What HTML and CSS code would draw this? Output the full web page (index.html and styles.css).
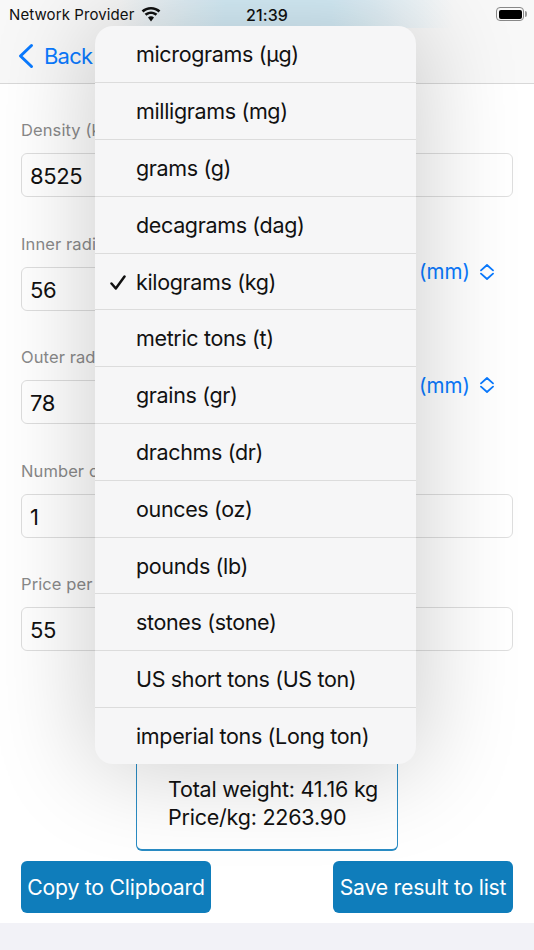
FILE: index.html
```html
<!DOCTYPE html>
<html lang="en">
<head>
<meta charset="utf-8">
<title>Ring weight</title>
<link rel="stylesheet" href="styles.css">
</head>
<body>
<div class="screen">
  <header class="top">
    <div class="status">
      <div class="status-left">
        <span>Network Provider</span>
        <svg class="wifi" viewBox="0 0 20 15" width="20" height="15"><path d="M10 2.600c2.900 0 5.500 1.100 7.500 2.900l1.900-2C16.900 1.300 13.600 0 10 0S3.100 1.300.6 3.500l1.900 2c2-1.800 4.600-2.900 7.500-2.900z"/><path d="M10 7.100c1.700 0 3.300.6 4.500 1.700l1.900-2C14.700 5.300 12.500 4.400 10 4.400s-4.700.9-6.400 2.400l1.900 2C6.700 7.700 8.300 7.100 10 7.100z"/><path d="M10 9.300c-1.200 0-2.200.4-3 1.100l3 4 3-4c-.8-.7-1.800-1.100-3-1.100z"/></svg>
      </div>
      <span class="clock">21:39</span>
      <div class="battery"><span class="battery-fill"></span></div>
    </div>
    <nav class="nav">
      <svg class="chev" viewBox="0 0 17 26" width="17" height="26"><path d="M14.500 2.500 3.500 13l11 10.500" fill="none" stroke="currentColor" stroke-width="3" stroke-linecap="round" stroke-linejoin="round"/></svg>
      <span>Back</span>
    </nav>
  </header>
  <main class="content">
    <div class="field">
      <label class="label">Density (kg/m³)</label>
      <div class="row"><div class="input">8525</div></div>
    </div>
    <div class="field">
      <label class="label">Inner radius</label>
      <div class="row"><div class="input short">56</div><div class="unit">(mm)<svg viewBox="0 0 14 16" width="14" height="16"><path d="M1 6.300 7 1l6 5.300M1 9.700 7 15l6-5.300" fill="none" stroke="currentColor" stroke-width="1.800" stroke-linecap="round" stroke-linejoin="round"/></svg></div></div>
    </div>
    <div class="field">
      <label class="label">Outer radius</label>
      <div class="row"><div class="input short">78</div><div class="unit">(mm)<svg viewBox="0 0 14 16" width="14" height="16"><path d="M1 6.300 7 1l6 5.300M1 9.700 7 15l6-5.300" fill="none" stroke="currentColor" stroke-width="1.800" stroke-linecap="round" stroke-linejoin="round"/></svg></div></div>
    </div>
    <div class="field">
      <label class="label">Number of items</label>
      <div class="row"><div class="input">1</div></div>
    </div>
    <div class="field">
      <label class="label">Price per kg</label>
      <div class="row"><div class="input">55</div></div>
    </div>
    <div class="result">
      <div>Total weight: 41.16 kg</div>
      <div>Price/kg: 2263.90</div>
    </div>
    <div class="actions">
      <button class="btn">Copy to Clipboard</button>
      <button class="btn">Save result to list</button>
    </div>
  </main>
  <div class="menu">
    <div class="item">micrograms (µg)</div>
    <div class="item">milligrams (mg)</div>
    <div class="item">grams (g)</div>
    <div class="item">decagrams (dag)</div>
    <div class="item"><svg class="check" viewBox="0 0 16 15" width="16" height="15"><path d="M1.500 8.500 5.800 13.500 14.500 1.500" fill="none" stroke="currentColor" stroke-width="2.500" stroke-linecap="round" stroke-linejoin="round"/></svg>kilograms (kg)</div>
    <div class="item">metric tons (t)</div>
    <div class="item">grains (gr)</div>
    <div class="item">drachms (dr)</div>
    <div class="item">ounces (oz)</div>
    <div class="item">pounds (lb)</div>
    <div class="item">stones (stone)</div>
    <div class="item">US short tons (US ton)</div>
    <div class="item">imperial tons (Long ton)</div>
  </div>
</div>
</body>
</html>
```
FILE: styles.css
```css
* { box-sizing: border-box; }
html, body { margin: 0; padding: 0; }
body { font-family: Inter, "Liberation Sans", sans-serif; color: #111; background: #f2f2f7; }
.screen { position: relative; width: 534px; height: 950px; overflow: hidden; background: #f2f2f7; }
.top { height: 84px; background: linear-gradient(90deg, #f8f8f8 22%, #d8f0fb 42%, #d8f0fb 62%, #f8f8f8 85%) top / 100% 28px no-repeat, #f8f8f8; border-bottom: 1px solid #d8d8d8; }
.status { position: relative; height: 28px; display: flex; align-items: center; justify-content: space-between; padding: 0 9px; font-size: 15px; letter-spacing: .1px; }
.status-left { display: flex; align-items: center; gap: 7px; }
.clock { position: absolute; left: 246px; top: 5px; font-size: 16px; font-weight: 500; }
.wifi { fill: #111; }
.battery { position: relative; width: 28px; height: 14px; border: 1px solid #888; border-radius: 4px; padding: 1.500px; margin-right: 1px; }
.battery::after { content: ""; position: absolute; right: -4px; top: 3px; width: 2px; height: 6px; background: #999; border-radius: 0 2px 2px 0; }
.battery-fill { display: block; height: 100%; background: #000; border-radius: 2px; }
.nav { height: 55px; display: flex; align-items: center; gap: 10px; padding-left: 17px; font-size: 22px; letter-spacing: -.8px; color: #0a7aff; }
.content { height: 839px; background: #fff; padding: 33px 21px 0; }
.field { height: 113.600px; }
.label { display: block; height: 36px; font-size: 16.500px; letter-spacing: .1px; color: #8a8a8a; line-height: 26px; }
.row { display: flex; align-items: center; }
.input { flex: 1; height: 44px; border: 1px solid #dedede; border-radius: 6px; padding-left: 8px; font-size: 22px; letter-spacing: -.4px; line-height: 44px; background: #fff; }
.short { flex: 0 0 385px; }
.unit { display: flex; align-items: center; gap: 10px; margin: -34px 0 0 13px; font-size: 20.500px; color: #0a7aff; }
.result { margin: -40px auto 0; width: 262px; height: 206px; padding: 130px 0 0 31px; border-style: solid; border-color: #2a8cc4; border-width: 0 1px 2px; border-radius: 6px; font-size: 21.500px; letter-spacing: -.22px; line-height: 28.500px; }
.actions { display: flex; justify-content: space-between; margin-top: 10px; }
.btn { height: 52px; padding: 0; width: 190px; border: 0; border-radius: 6px; background: #0f7dbb; color: #fff; font: inherit; font-size: 21.200px; letter-spacing: -.22px; }
.btn + .btn { width: 180px; }
.menu { position: absolute; left: 95px; top: 26px; width: 321px; background: #f6f6f7; border-radius: 18px; box-shadow: 0 0 100px 5px rgba(0,0,0,.2); overflow: hidden; }
.item { position: relative; height: 56.800px; line-height: 56px; padding-left: 41px; font-size: 21.500px; letter-spacing: -.35px; border-top: 1px solid #dcdcdc; }
.item:first-child { height: 56.300px; border-top: 0; }
.check { position: absolute; left: 15px; top: 21px; }
```
